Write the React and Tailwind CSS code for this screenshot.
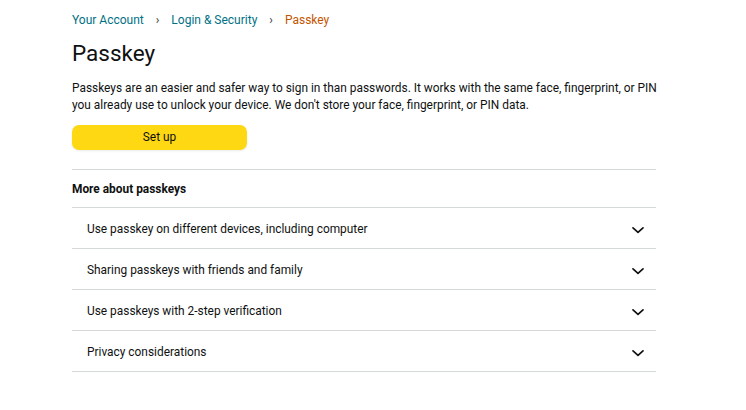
const items = [
  'Use passkey on different devices, including computer',
  'Sharing passkeys with friends and family',
  'Use passkeys with 2-step verification',
  'Privacy considerations',
]

const Chevron = () => (
  <svg width="12" height="12" viewBox="0 0 12 12" fill="none" className="text-[#0f1111]">
    <path d="M1 3.8 L6 8.3 L11 3.8" stroke="currentColor" strokeWidth="1.7" strokeLinecap="round" strokeLinejoin="round" />
  </svg>
)

export default function App() {
  return (
    <div className="min-h-screen bg-white text-[#0f1111]" style={{ fontFamily: 'Roboto, Arial, sans-serif' }}>
      <div className="w-[584px] ml-[72px] pt-[11px]">
        <nav className="flex items-center text-[12px] leading-[18px]">
          <span className="text-[#007185]">Your Account</span>
          <span className="mx-[12px] text-[#333] text-[12px]">›</span>
          <span className="text-[#007185]">Login &amp; Security</span>
          <span className="mx-[12px] text-[#333] text-[12px]">›</span>
          <span className="text-[#c45500]">Passkey</span>
        </nav>
        <h1 className="mt-[9px] text-[22.5px] leading-[30px] font-normal">Passkey</h1>
        <p className="mt-[12px] text-[11.9px] leading-[17px] whitespace-nowrap">
          Passkeys are an easier and safer way to sign in than passwords. It works with the same face, fingerprint, or PIN
          <br />
          you already use to unlock your device. We don't store your face, fingerprint, or PIN data.
        </p>
        <button
          type="button"
          className="mt-[11px] w-[175px] h-[25px] rounded-[7px] bg-[#ffd814] text-[11.9px] text-[#0f1111] shadow-[0_1px_2px_rgba(213,217,217,0.5)]"
        >
          Set up
        </button>
        <div className="mt-[19px] border-t border-[#d5d9d9]" />
        <div className="h-[37px] flex items-center pt-[3px] text-[11.9px] font-bold">More about passkeys</div>
        <div className="border-t border-[#d5d9d9]">
          {items.map((t) => (
            <div key={t} className="h-[41px] flex items-center justify-between pt-[3px] pl-[15px] pr-[12px] border-b border-[#d5d9d9] text-[11.9px]">
              <span>{t}</span>
              <Chevron />
            </div>
          ))}
        </div>
      </div>
    </div>
  )
}
